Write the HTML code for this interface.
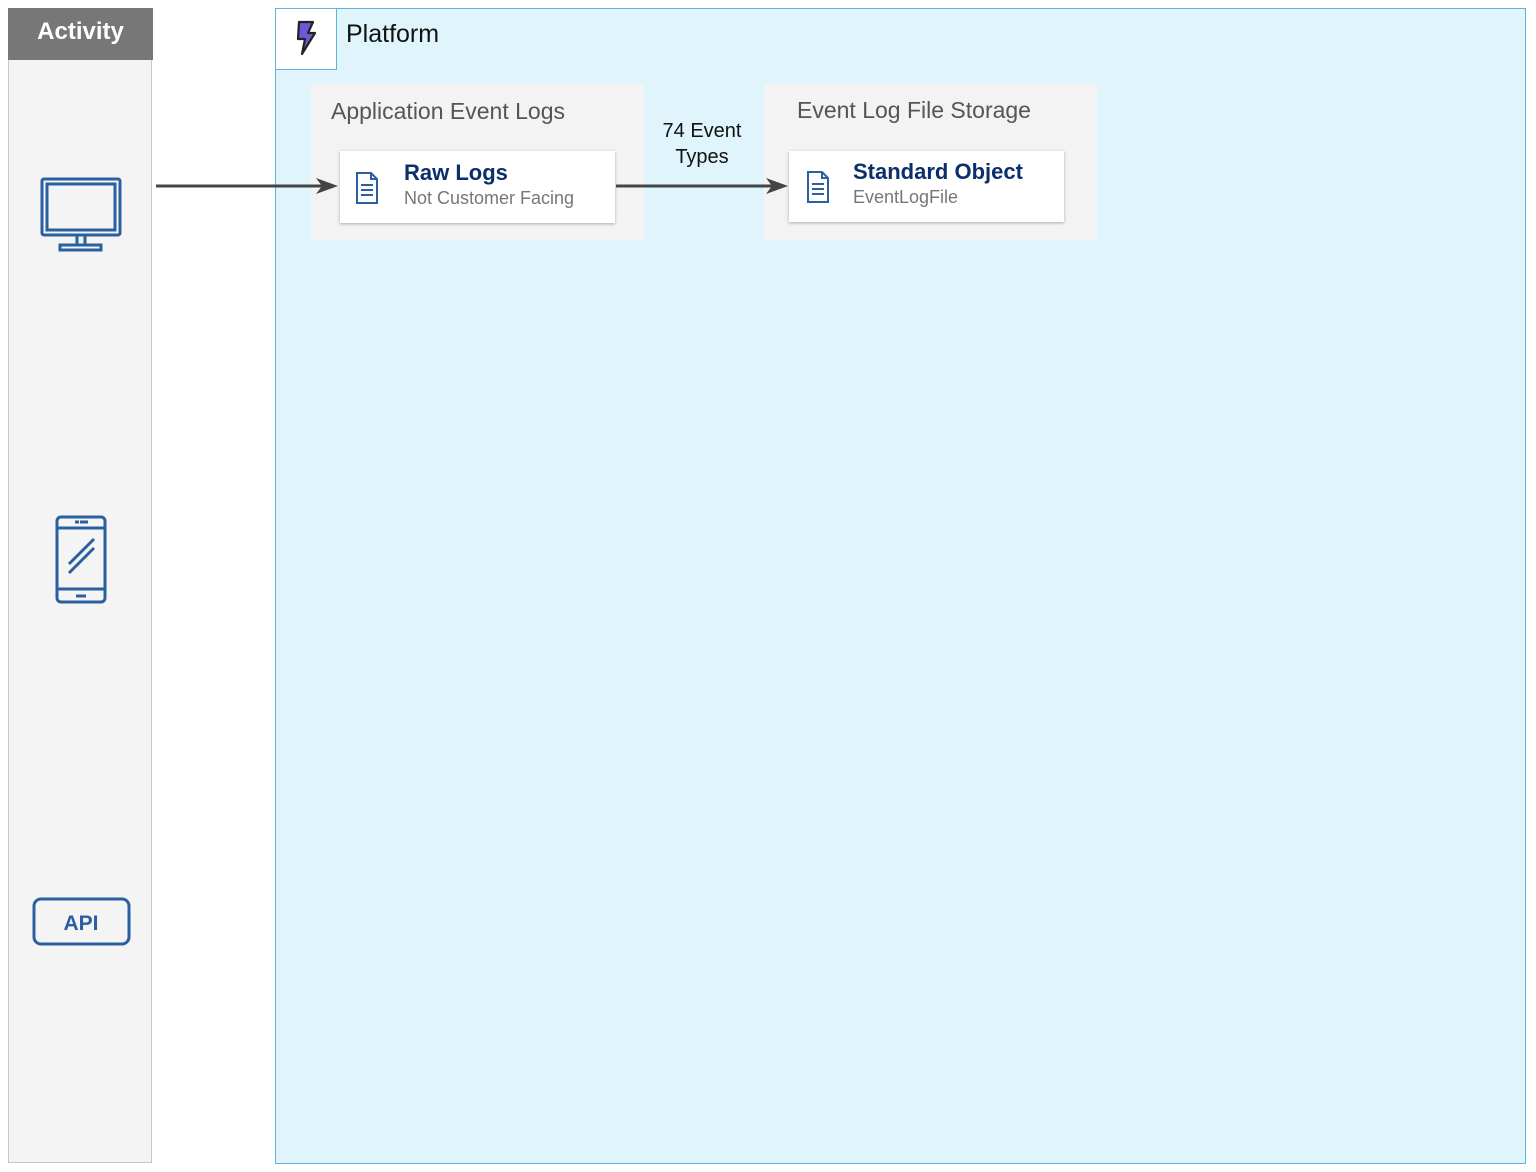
<!DOCTYPE html>
<html><head><style>
body{margin:0;width:1536px;height:1172px;background:#fff;position:relative;font-family:"Liberation Sans",sans-serif;overflow:hidden}
.a{position:absolute}
</style></head><body>
<div class="a" style="left:8px;top:8px;width:144px;height:1155px;background:#f4f4f4;border:1px solid #c8c8c8;box-sizing:border-box"></div>
<div class="a" style="left:8px;top:8px;width:145px;height:52px;background:#777;color:#fff;font-size:24px;font-weight:bold;text-align:center;line-height:48px">Activity</div>
<div class="a" style="left:275px;top:8px;width:1251px;height:1156px;background:#e0f4fc;border:1px solid #5fb3dc;box-sizing:border-box"></div>
<div class="a" style="left:275px;top:8px;width:62px;height:62px;background:#fff;border:1px solid #5fb3dc;box-sizing:border-box"></div>
<svg class="a" style="left:290px;top:20px" width="32" height="36" viewBox="0 0 32 36"><path d="M9 2h14l-5 11h7L12 34l3-15H8z" fill="#6b5ad6" stroke="#222" stroke-width="2.2" stroke-linejoin="round"/></svg>
<div class="a" style="left:346px;top:20px;font-size:25px;color:#111">Platform</div>
<div class="a" style="left:311px;top:84px;width:333px;height:156px;background:#f3f3f3"></div>
<div class="a" style="left:331px;top:98px;font-size:23px;color:#555">Application Event Logs</div>
<div class="a" style="left:340px;top:151px;width:275px;height:72px;background:#fff;box-shadow:0 1px 3px rgba(0,0,0,.3)"></div>
<div class="a" style="left:404px;top:160px;font-size:22px;font-weight:bold;color:#0b2f6b">Raw Logs</div>
<div class="a" style="left:404px;top:188px;font-size:18px;color:#777">Not Customer Facing</div>
<div class="a" style="left:764px;top:84px;width:333px;height:156px;background:#f3f3f3"></div>
<div class="a" style="left:797px;top:97px;font-size:23px;color:#555">Event Log File Storage</div>
<div class="a" style="left:789px;top:151px;width:275px;height:71px;background:#fff;box-shadow:0 1px 3px rgba(0,0,0,.3)"></div>
<div class="a" style="left:853px;top:159px;font-size:22px;font-weight:bold;color:#0b2f6b">Standard Object</div>
<div class="a" style="left:853px;top:187px;font-size:18px;color:#777">EventLogFile</div>
<div class="a" style="left:650px;top:118px;width:104px;text-align:center;font-size:20px;line-height:26px;color:#111">74 Event<br>Types</div>
<svg class="a" style="left:0;top:0" width="1536" height="1172">
<g fill="none" stroke="#2a5fa0" stroke-width="2">
<path d="M357 173h14l6 6v24h-20z M371 173v6h6 M361 185h12 M361 190h12 M361 195h12"/>
<path d="M808 172h14l6 6v24h-20z M822 172v6h6 M812 184h12 M812 189h12 M812 194h12"/>
</g>
<g fill="none" stroke="#444" stroke-width="3"><path d="M156 186h178"/><path d="M616 186h168"/></g>
<path d="M338 186l-22-8 6 8-6 8z" fill="#444"/><path d="M788 186l-22-8 6 8-6 8z" fill="#444"/>
<g fill="none" stroke="#2a5fa0" stroke-width="3">
<rect x="42" y="179" width="78" height="56" rx="2"/><rect x="47" y="184" width="68" height="46"/>
<path d="M77 236v9M85 236v9"/><rect x="60" y="245" width="41" height="5"/>
<rect x="57" y="517" width="48" height="85" rx="4"/><path d="M57 528h48M57 589h48M69 564l25-25M69 573l25-25M75 522h4M80 522h8M76 596h10"/>
<rect x="34" y="899" width="95" height="45" rx="7"/>
</g>
<text x="81" y="930" font-family="Liberation Sans" font-size="21" font-weight="bold" fill="#2a5fa0" text-anchor="middle">API</text>
</svg>
</body></html>
